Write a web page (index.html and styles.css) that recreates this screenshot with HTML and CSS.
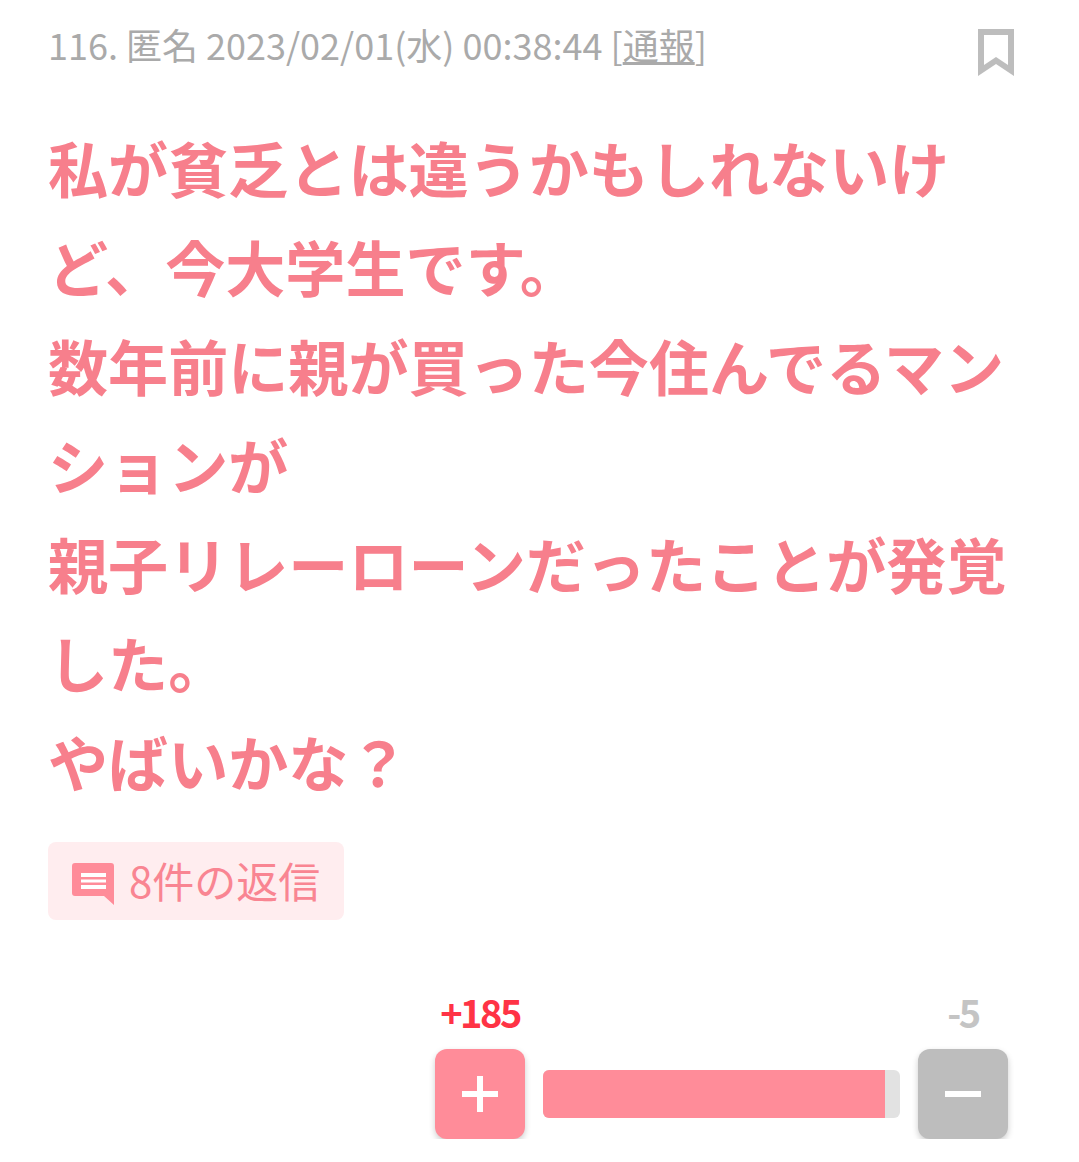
FILE: index.html
```html
<!DOCTYPE html>
<html lang="ja">
<head>
    <meta charset="UTF-8">
    <meta name="viewport" content="width=device-width, initial-scale=1.0">
    <title>116. 匿名</title>
    <link rel="stylesheet" href="styles.css">
</head>
<body>
    <div class="comment">
        <div class="comment-head">
            <p class="comment-meta">116. 匿名 2023/02/01(水) 00:38:44 [<a href="#">通報</a>]</p>
            <svg class="bookmark" width="36" height="48" viewBox="0 0 36 48">
                <path d="M0 0H36V47L18 35L0 47Z M6 6V36L18 28L30 36V6Z" fill="#bdbdbd" fill-rule="evenodd"/>
            </svg>
        </div>
        <p class="comment-body">私が貧乏とは違うかもしれないけど、今大学生です。<br>数年前に親が買った今住んでるマンションが<br>親子リレーローンだったことが発覚した。<br>やばいかな？</p>
        <a class="reply" href="#">
            <svg class="reply-icon" width="42" height="42" viewBox="0 0 42 42">
                <path d="M3 0H39Q42 0 42 3V42L32 33H3Q0 33 0 30V3Q0 0 3 0Z" fill="#ff8c99"/>
                <path d="M9 10H34V14H9Z M9 16.500H34V19.500H9Z M9 22H34V26H9Z" fill="#fff"/>
            </svg>
            <span class="reply-text">8件の返信</span>
        </a>
        <div class="vote">
            <div class="vote-side">
                <span class="count count-plus">+185</span>
                <div class="vote-btn btn-plus"><span class="bar-h"></span><span class="bar-v"></span></div>
            </div>
            <div class="ratio"><div class="ratio-fill"></div></div>
            <div class="vote-side">
                <span class="count count-minus">-5</span>
                <div class="vote-btn btn-minus"><span class="bar-h"></span></div>
            </div>
        </div>
    </div>
</body>
</html>
```

FILE: styles.css
```css
body {
    font-family: "Noto Sans CJK JP", "Noto Sans", sans-serif;
    margin: 0;
    padding: 0;
    background-color: #fff;
}
.comment {
    padding: 18px 48px 0 48px;
}
.comment-head {
    display: flex;
    justify-content: space-between;
    align-items: flex-start;
    padding-right: 17px;
}
.comment-meta {
    margin: 0;
    font-size: 36px;
    line-height: 52px;
    color: #aaa;
}
.comment-meta a {
    color: #aaa;
}
.bookmark {
    margin-top: 11px;
}
.comment-body {
    margin: 40px 0 0 0;
    font-size: 60.1px;
    font-weight: bold;
    line-height: 99px;
    color: #f77f8c;
}
.reply {
    display: inline-flex;
    align-items: center;
    gap: 15px;
    margin-top: 32px;
    padding: 0 24px;
    height: 78px;
    border-radius: 8px;
    background-color: #ffedef;
    color: #f98592;
    font-size: 42px;
    text-decoration: none;
}
.reply-icon {
    margin-top: 6px;
}
.reply-text {
    margin-bottom: 4px;
}
.vote {
    display: flex;
    justify-content: flex-end;
    align-items: flex-end;
    gap: 18px;
    margin-top: 66px;
    padding-right: 23px;
}
.vote-side {
    display: flex;
    flex-direction: column;
    align-items: center;
    gap: 11px;
}
.count {
    font-size: 38px;
    font-weight: bold;
    line-height: 52px;
    letter-spacing: -2.5px;
}
.count-plus {
    color: #ff3345;
}
.count-minus {
    color: #c4c4c4;
}
.vote-btn {
    display: flex;
    align-items: center;
    justify-content: center;
    position: relative;
    width: 90px;
    height: 90px;
    border-radius: 12px;
    box-shadow: 0 3px 6px rgba(0,0,0,0.2);
}
.btn-plus {
    background-color: #ff8c99;
}
.btn-minus {
    background-color: #bdbdbd;
}
.bar-h {
    width: 36px;
    height: 6px;
    background-color: #fff;
}
.bar-v {
    position: absolute;
    top: 27px;
    left: 42px;
    width: 6px;
    height: 36px;
    background-color: #fff;
}
.ratio {
    width: 357px;
    height: 48px;
    margin-bottom: 21px;
    border-radius: 6px;
    background-color: #e2e2e2;
    overflow: hidden;
}
.ratio-fill {
    width: 342px;
    height: 100%;
    background-color: #ff8c99;
}
```
